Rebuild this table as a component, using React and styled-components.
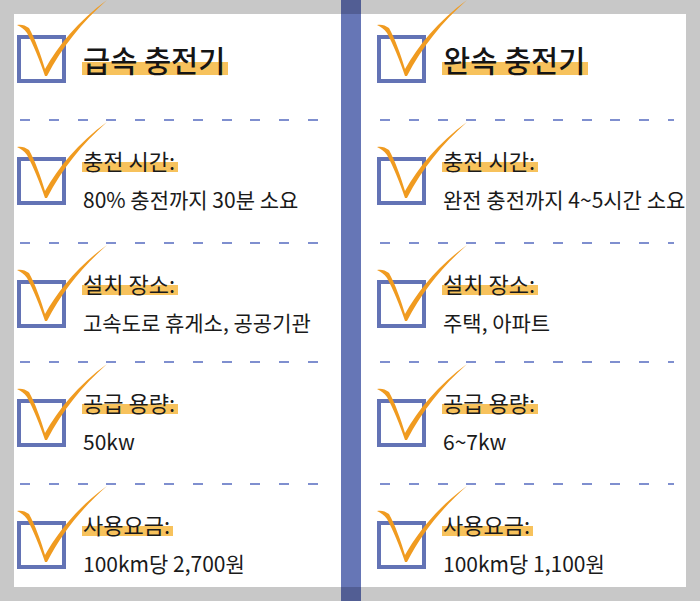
import React from "react";
import styled, { createGlobalStyle } from "styled-components";

const GlobalStyle = createGlobalStyle`
  body {
    margin: 0;
    background: #c8c8c8;
    font-family: "Noto Sans CJK KR", "Noto Sans", sans-serif;
  }
`;

const chargers = [
  {
    title: "급속 충전기",
    items: [
      ["충전 시간:", "80% 충전까지 30분 소요"],
      ["설치 장소:", "고속도로 휴게소, 공공기관"],
      ["공급 용량:", "50kw"],
      ["사용요금:", "100km당 2,700원"],
    ],
  },
  {
    title: "완속 충전기",
    items: [
      ["충전 시간:", "완전 충전까지 4~5시간 소요"],
      ["설치 장소:", "주택, 아파트"],
      ["공급 용량:", "6~7kw"],
      ["사용요금:", "100km당 1,100원"],
    ],
  },
];

// row heights between the dashed rules
const rowHeights = [121, 117, 120, 102];

const panelLayout = [
  { width: 327, inset: 3, dashLeft: 6, dashWidth: 298 },
  { width: 325, inset: 16, dashLeft: 19, dashWidth: 294 },
];

function Check() {
  return (
    <CheckMark viewBox="0 0 95 80" width="95" height="80">
      <path
        d="M1,26 C5,25 9,26 13,29 C19,40 25,56 29,70 C42,47 62,22 91,1 C66,23 46,48 31,77 L29,77 C24,62 17,45 11,34 C8,30 5,28 1,26 Z"
        fill="#f09b20"
      />
    </CheckMark>
  );
}

function Box() {
  return (
    <CheckBox>
      <Check />
    </CheckBox>
  );
}

function Panel({ data, layout }) {
  return (
    <Card $width={layout.width}>
      <Section $h={105} $top={21} $inset={layout.inset}>
        <Content>
          <Box />
          <Title>
            <Mark>{data.title}</Mark>
          </Title>
        </Content>
      </Section>
      {data.items.map(([label, value], i) => (
        <React.Fragment key={label}>
          <Dash $left={layout.dashLeft} $width={layout.dashWidth} />
          <Section $h={rowHeights[i]} $top={36} $inset={layout.inset}>
            <Content>
              <Box />
              <TextCol>
                <Label>
                  <Mark>{label}</Mark>
                </Label>
                <Value>{value}</Value>
              </TextCol>
            </Content>
          </Section>
        </React.Fragment>
      ))}
    </Card>
  );
}

export default function App() {
  return (
    <Page>
      <GlobalStyle />
      <Panel data={chargers[0]} layout={panelLayout[0]} />
      <Divider />
      <Panel data={chargers[1]} layout={panelLayout[1]} />
    </Page>
  );
}

const Page = styled.div`
  display: flex;
  width: 700px;
  height: 601px;
  padding: 0 14px;
  box-sizing: border-box;
  background: #c8c8c8;
`;

const Card = styled.div`
  width: ${(p) => p.$width}px;
  margin: 14px 0;
  background: #ffffff;
  display: flex;
  flex-direction: column;
`;

const Divider = styled.div`
  width: 20px;
  align-self: stretch;
  background: linear-gradient(
    to bottom,
    #525e94 0 14px,
    #6676b6 14px calc(100% - 14px),
    #525e94 calc(100% - 14px)
  );
`;

const Section = styled.div`
  height: ${(p) => p.$h}px;
  padding-top: ${(p) => p.$top}px;
  padding-left: ${(p) => p.$inset}px;
  box-sizing: border-box;
  flex-shrink: 0;
`;

const Content = styled.div`
  display: flex;
  align-items: center;
  gap: 17px;
  height: 48px;
`;

const CheckBox = styled.div`
  position: relative;
  width: 49px;
  height: 48px;
  box-sizing: border-box;
  border: 4px solid #6373b5;
  flex-shrink: 0;
`;

const CheckMark = styled.svg`
  position: absolute;
  left: -5px;
  top: -40px;
  overflow: visible;
  z-index: 2;
`;

const Title = styled.div`
  font-size: 29.5px;
  font-weight: 500;
  line-height: 38px;
  color: #151515;
`;

const Mark = styled.span`
  display: inline-block;
  margin-left: -1px;
  padding: 0 3px 0 1px;
  background: linear-gradient(
    to bottom,
    transparent 57%,
    #f7c25c 57%,
    #f7c25c 93%,
    transparent 93%
  );
`;

const TextCol = styled.div`
  display: flex;
  flex-direction: column;
  gap: 12px;
  margin-top: -4px;
`;

const Label = styled.div`
  font-size: 22px;
  line-height: 27px;
  color: #1a1a1a;
  white-space: nowrap;
`;

const Value = styled.div`
  font-size: 21px;
  line-height: 26px;
  color: #1a1a1a;
  white-space: nowrap;
`;

const Dash = styled.div`
  height: 2px;
  flex-shrink: 0;
  margin-left: ${(p) => p.$left}px;
  width: ${(p) => p.$width}px;
  background: repeating-linear-gradient(
    to right,
    #7f8fcf 0 10px,
    transparent 10px 28.8px
  );
`;
